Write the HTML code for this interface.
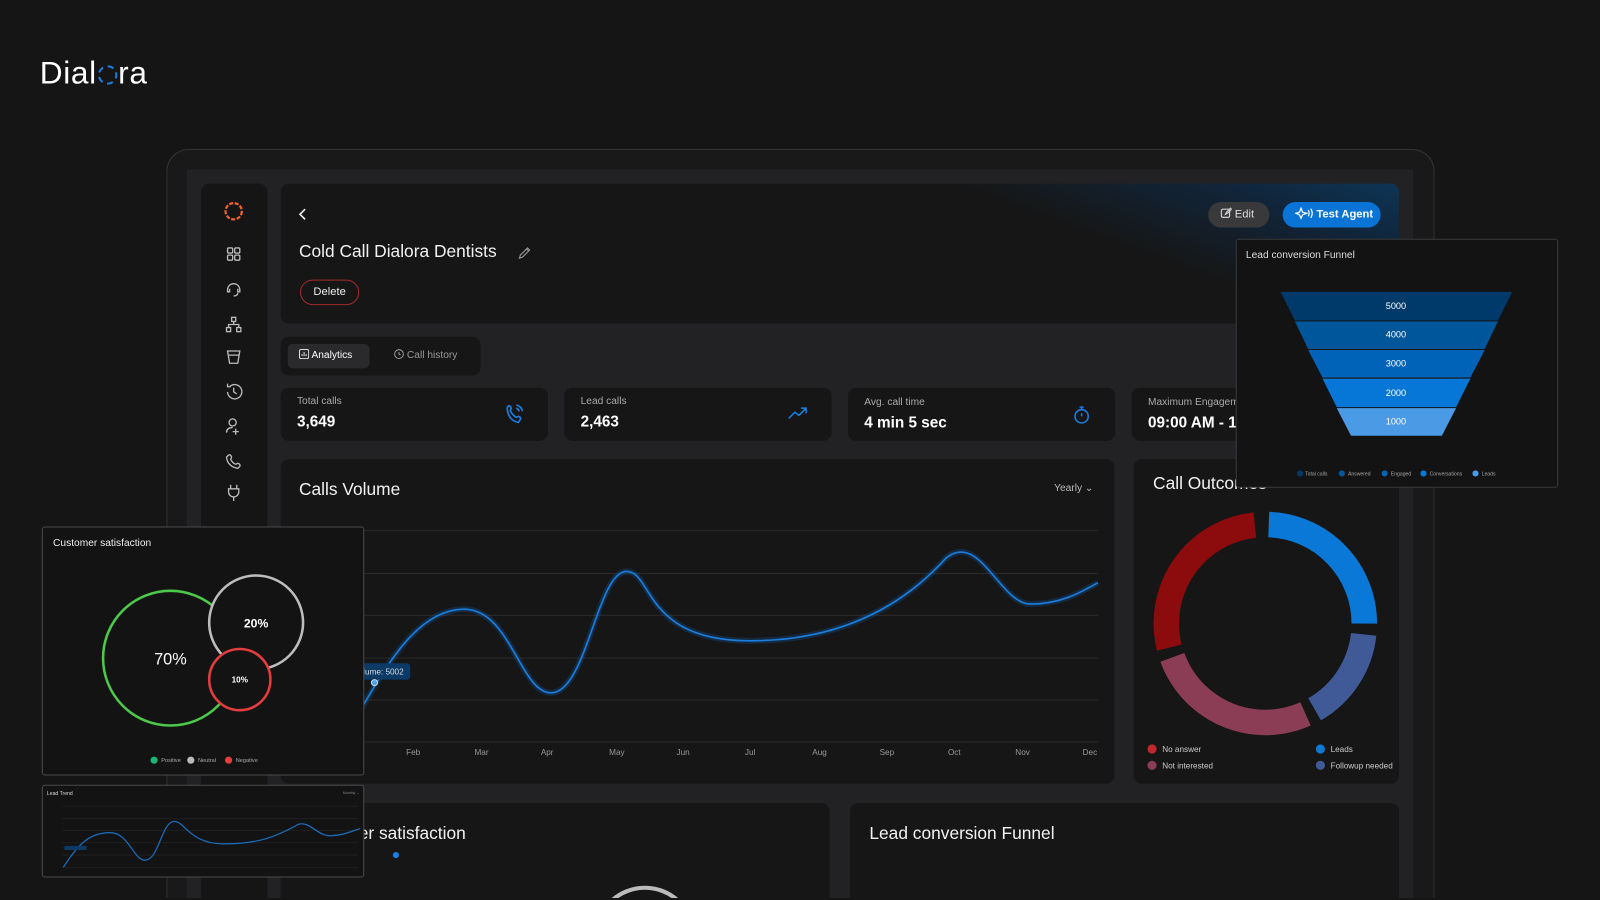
<!DOCTYPE html>
<html><head><meta charset="utf-8">
<style>
*{margin:0;padding:0;box-sizing:border-box}
html,body{width:1600px;height:900px;overflow:hidden;background:#151515;font-family:"Liberation Sans",sans-serif;color:#eee}
#w{position:absolute;left:0;top:0;width:1568px;height:880px;overflow:hidden;transform:scale(1.020408);transform-origin:0 0}
.a{position:absolute}
.card{position:absolute;background:#161616;border-radius:8px}
.lbl{font-size:10px;color:#aaa}
.val{font-size:15px;font-weight:bold;color:#fff}
.mo{position:absolute;top:733px;font-size:8px;color:#999}
</style></head><body><div id="w">

<div class="a" style="left:39px;top:54px;font-size:31px;color:#fff;letter-spacing:0.6px">Dial<span style="display:inline-block;width:19px;height:19px;border:2.5px dashed #1a7ee0;border-radius:50%;margin:0 1px;vertical-align:-1px"></span>ra</div>

<div class="a" style="left:163px;top:146px;width:1243px;height:736px;border:1.5px solid #343436;border-bottom:none;border-radius:22px 22px 0 0;background:#191919"></div>
<div class="a" style="left:183px;top:166px;width:1202px;height:716px;background:#222224"></div>

<div class="card" style="left:197px;top:180px;width:65px;height:702px;background:#151515;border-radius:8px 8px 0 0"></div>
<svg class="a" style="left:197px;top:180px" width="65" height="360" fill="none" stroke="#bbb" stroke-width="1.3">
<circle cx="32" cy="27" r="8" stroke="#f0632b" stroke-width="2.2" stroke-dasharray="4 1.5"/>
<rect x="26" y="63" width="5" height="5" rx="1"/><rect x="33" y="63" width="5" height="5" rx="1"/><rect x="26" y="70" width="5" height="5" rx="1"/><rect x="33" y="70" width="5" height="5" rx="1"/>
<path d="M26 104a6 6 0 0 1 12 0M26 104v2h2v-3M38 104v2h-2v-3M36 107q0 3-4 3"/>
<rect x="30" y="131" width="4" height="4"/><rect x="25" y="141" width="4" height="4"/><rect x="35" y="141" width="4" height="4"/><path d="M32 135v3M27 141v-3h10v3"/>
<path d="M26 164h12l-2 12h-8zM27 168h10"/>
<path d="M26 204a7 7 0 1 0 2-5M26 196v3h3M32 200v4l3 2"/>
<circle cx="31" cy="234" r="3.5"/><path d="M25 244q0-5 6-5M34 240v6M31 243h6"/>
<path d="M27 266q2-1 3 2l-1 2q2 4 5 5l2-1q3 1 2 3l-2 2q-10-2-11-11z"/>
<path d="M29 299v-4M35 299v-4M27 299h10v3a5 5 0 0 1-10 0zM32 307v4"/>
</svg>

<div class="card" style="left:275px;top:180px;width:1096px;height:137px;background:linear-gradient(200deg,#0d3556 0%,#11253a 12%,#161616 30%)"></div>
<svg class="a" style="left:290px;top:203px" width="14" height="14" fill="none" stroke="#eee" stroke-width="1.6"><path d="M9 2L4 7l5 5"/></svg>
<div class="a" style="left:293px;top:237px;font-size:17px;color:#f2f2f2">Cold Call Dialora Dentists</div>
<svg class="a" style="left:507px;top:241px" width="14" height="14" fill="none" stroke="#999" stroke-width="1.1"><path d="M2 12l1-3 7-7 2 2-7 7zM9 3l2 2"/></svg>
<div class="a" style="left:294px;top:274px;width:58px;height:25px;border:1.3px solid #a42a2a;border-radius:13px;font-size:11px;text-align:center;line-height:22px;color:#eee">Delete</div>
<div class="a" style="left:1184px;top:198px;width:60px;height:25px;background:#39393b;border-radius:13px;font-size:11px;line-height:25px;color:#ddd;padding-left:12px">
<svg width="11" height="11" style="vertical-align:-1px" fill="none" stroke="#ccc" stroke-width="1.2"><rect x="1" y="2" width="8" height="8" rx="1.5"/><path d="M5 7l1-2 4-4 1 1-4 4z"/></svg> Edit</div>
<div class="a" style="left:1257px;top:198px;width:96px;height:25px;background:#0a74d6;border-radius:13px;font-size:11px;line-height:25px;color:#fff;padding-left:12px;font-weight:bold">
<svg width="18" height="12" style="vertical-align:-2px" fill="none" stroke="#fff" stroke-width="1.2"><path d="M6 1l1.5 4 4 1-4 1.5L6 11 4.5 7.5 1 6l3.5-1zM13 3q2 3 0 6M15.5 1.5q3 4.5 0 9"/></svg> Test Agent</div>

<div class="card" style="left:275px;top:330px;width:196px;height:38px"></div>
<div class="a" style="left:282px;top:337px;width:80px;height:24px;background:#2a2a2c;border-radius:5px;font-size:10px;line-height:24px;padding-left:11px;color:#fff">
<svg width="10" height="10" style="vertical-align:-1px" fill="none" stroke="#ddd" stroke-width="1"><rect x="0.5" y="0.5" width="9" height="9" rx="1.5"/><path d="M3 7V5M5 7V3M7 7V5"/></svg> Analytics</div>
<div class="a" style="left:386px;top:337px;font-size:10px;line-height:24px;color:#999">
<svg width="10" height="10" style="vertical-align:-1px" fill="none" stroke="#999" stroke-width="1"><circle cx="5" cy="5" r="4.3"/><path d="M5 3v2l1.5 1"/></svg> Call history</div>

<div class="card" style="left:275px;top:380px;width:262px;height:52px"></div>
<div class="a lbl" style="left:291px;top:388px">Total calls</div><div class="a val" style="left:291px;top:405px">3,649</div>
<svg class="a" style="left:494px;top:395px" width="22" height="22" fill="none" stroke="#1a7fe0" stroke-width="1.6"><path d="M4 3q2-1 3 2l-1 2q2 5 6 7l2-1q3 1 2 3l-2 3Q4 17 3 5zM12 2q5 1 6 6M12 5q2 1 3 3"/></svg>
<div class="card" style="left:553px;top:380px;width:262px;height:52px"></div>
<div class="a lbl" style="left:569px;top:388px">Lead calls</div><div class="a val" style="left:569px;top:405px">2,463</div>
<svg class="a" style="left:772px;top:398px" width="20" height="14" fill="none" stroke="#1a7fe0" stroke-width="1.5"><path d="M1 12l6-6 4 3 7-7M13 2h5v5"/></svg>
<div class="card" style="left:831px;top:380px;width:262px;height:52px"></div>
<div class="a lbl" style="left:847px;top:389px">Avg. call time</div><div class="a val" style="left:847px;top:406px">4 min 5 sec</div>
<svg class="a" style="left:1050px;top:396px" width="20" height="22" fill="none" stroke="#1a7fe0" stroke-width="1.5"><circle cx="10" cy="12" r="6.5"/><path d="M10 12V9M8 3h4M10 3v2"/></svg>
<div class="card" style="left:1109px;top:380px;width:262px;height:52px"></div>
<div class="a lbl" style="left:1125px;top:389px">Maximum Engagement</div><div class="a val" style="left:1125px;top:406px">09:00 AM - 1</div>

<div class="card" style="left:275px;top:450px;width:817px;height:318px"></div>
<div class="a" style="left:293px;top:470px;font-size:17px;color:#f2f2f2">Calls Volume</div>
<div class="a" style="left:1033px;top:473px;font-size:10px;color:#bbb">Yearly &#8964;</div>
<svg class="a" style="left:275px;top:450px" width="817" height="318">
<g stroke="#2a2a2a" stroke-width="1"><path d="M15 70H801M15 112H801M15 153H801M15 195H801M15 236H801M15 277H801"/></g>
<g transform="translate(-275,-450)" fill="none">
<path d="M352,698 C380,650 410,597 455,597 C500,597 510,679 540,679 C575,679 585,560 614,560 C640,560 630,628 735,628 C800,628 870,610 927,547 C960,520 980,592 1010,592 C1040,592 1060,580 1076,571" stroke="#0a66c0" stroke-width="6" opacity="0.25"/>
<path d="M352,698 C380,650 410,597 455,597 C500,597 510,679 540,679 C575,679 585,560 614,560 C640,560 630,628 735,628 C800,628 870,610 927,547 C960,520 980,592 1010,592 C1040,592 1060,580 1076,571" stroke="#1a7fe0" stroke-width="1.6"/>
<rect x="340" y="650" width="62" height="16" rx="3" fill="#0b3a66"/>
<text x="356" y="661" font-size="8" fill="#ddd" font-family="Liberation Sans">lume: 5002</text>
<circle cx="367" cy="669" r="3" fill="#4aa0f0" stroke="#cde" stroke-width="1"/>
</g></svg>
<div class="mo" style="left:398px">Feb</div><div class="mo" style="left:465px">Mar</div><div class="mo" style="left:530px">Apr</div><div class="mo" style="left:597px">May</div><div class="mo" style="left:663px">Jun</div><div class="mo" style="left:730px">Jul</div><div class="mo" style="left:796px">Aug</div><div class="mo" style="left:862px">Sep</div><div class="mo" style="left:929px">Oct</div><div class="mo" style="left:995px">Nov</div><div class="mo" style="left:1061px">Dec</div>

<div class="card" style="left:1111px;top:450px;width:260px;height:318px"></div>
<div class="a" style="left:1130px;top:464px;font-size:17px;color:#f2f2f2">Call Outcomes</div>
<svg class="a" style="left:1111px;top:450px" width="260" height="318" fill="none">
<g transform="translate(129,161) rotate(-90)" stroke-width="25">
<circle r="97" stroke="#0a78d6" stroke-dasharray="149 700" stroke-dashoffset="-3.4"/>
<circle r="97" stroke="#405a98" stroke-dasharray="91 700" stroke-dashoffset="-163"/>
<circle r="97" stroke="#8a3d55" stroke-dasharray="159 700" stroke-dashoffset="-264"/>
<circle r="97" stroke="#8c0b0c" stroke-dasharray="166 700" stroke-dashoffset="-433"/>
</g>
<circle cx="18" cy="284" r="4.5" fill="#c0282b"/><circle cx="18" cy="300" r="4.5" fill="#8a3d55"/>
<circle cx="183" cy="284" r="4.5" fill="#0a78d6"/><circle cx="183" cy="300" r="4.5" fill="#405a98"/>
<g font-size="8" fill="#ccc" font-family="Liberation Sans"><text x="28" y="287">No answer</text><text x="28" y="303">Not interested</text><text x="193" y="287">Leads</text><text x="193" y="303">Followup needed</text></g>
</svg>

<div class="card" style="left:275px;top:787px;width:538px;height:95px;border-radius:8px 8px 0 0"></div>
<div class="a" style="left:293px;top:807px;font-size:17px;color:#f2f2f2">Customer satisfaction</div>
<div class="a" style="left:385px;top:835px;width:6px;height:6px;border-radius:50%;background:#1a7fe0"></div>
<svg class="a" style="left:580px;top:866px" width="104" height="14" fill="none"><circle cx="52" cy="52" r="48" stroke="#bbb" stroke-width="4"/></svg>
<div class="card" style="left:833px;top:787px;width:538px;height:95px;border-radius:8px 8px 0 0"></div>
<div class="a" style="left:852px;top:807px;font-size:17px;color:#f2f2f2">Lead conversion Funnel</div>

<div class="a" style="left:1211px;top:234px;width:316px;height:244px;background:#131313;border:1px solid #3a3a3a;border-radius:3px"></div>
<div class="a" style="left:1221px;top:245px;font-size:10px;color:#ddd">Lead conversion Funnel</div>
<svg class="a" style="left:1211px;top:234px" width="316" height="244">
<polygon points="44,52 271,52 257,80 58,80" fill="#003a6b"/>
<polygon points="58,81 257,81 244,108 71,108" fill="#00569a"/>
<polygon points="71,109 244,109 230,136 85,136" fill="#0063b8"/>
<polygon points="85,137 230,137 216,165 99,165" fill="#0677d6"/>
<polygon points="99,166 216,166 202,193 113,193" fill="#4a9ae6"/>
<g font-size="9" fill="#fff" text-anchor="middle" font-family="Liberation Sans"><text x="157" y="69">5000</text><text x="157" y="97">4000</text><text x="157" y="125">3000</text><text x="157" y="154">2000</text><text x="157" y="182">1000</text></g>
<g font-size="5" fill="#aaa" font-family="Liberation Sans">
<circle cx="63" cy="230" r="3" fill="#003a6b"/><text x="68" y="232">Total calls</text>
<circle cx="104" cy="230" r="3" fill="#00569a"/><text x="110" y="232">Answered</text>
<circle cx="146" cy="230" r="3" fill="#0063b8"/><text x="152" y="232">Engaged</text>
<circle cx="184" cy="230" r="3" fill="#0677d6"/><text x="190" y="232">Conversations</text>
<circle cx="235" cy="230" r="3" fill="#4a9ae6"/><text x="241" y="232">Leads</text></g>
</svg>

<div class="a" style="left:41px;top:516px;width:316px;height:244px;background:#131313;border:1px solid #4a4a4a;border-radius:3px"></div>
<div class="a" style="left:52px;top:527px;font-size:10px;color:#eee">Customer satisfaction</div>
<svg class="a" style="left:41px;top:516px" width="316" height="244" fill="none" font-family="Liberation Sans">
<circle cx="126" cy="129" r="66" stroke="#4cc84a" stroke-width="2.5"/>
<circle cx="210" cy="94" r="46" stroke="#bdbdbd" stroke-width="2.5" fill="#131313"/>
<circle cx="194" cy="150" r="30" stroke="#e33d3d" stroke-width="2.5" fill="#131313"/>
<text x="126" y="135" font-size="16" fill="#fff" text-anchor="middle">70%</text>
<text x="210" y="99" font-size="12" fill="#fff" text-anchor="middle" font-weight="bold">20%</text>
<text x="194" y="153" font-size="8" fill="#fff" text-anchor="middle" font-weight="bold">10%</text>
<circle cx="110" cy="229" r="3.5" fill="#1db577"/><text x="117" y="231" font-size="5.5" fill="#aaa">Positive</text>
<circle cx="146" cy="229" r="3.5" fill="#bbb"/><text x="153" y="231" font-size="5.5" fill="#aaa">Neutral</text>
<circle cx="183" cy="229" r="3.5" fill="#e33d3d"/><text x="190" y="231" font-size="5.5" fill="#aaa">Negative</text>
</svg>

<div class="a" style="left:41px;top:769px;width:316px;height:91px;background:#131313;border:1px solid #4a4a4a;border-radius:3px"></div>
<svg class="a" style="left:41px;top:769px" width="316" height="91" fill="none" font-family="Liberation Sans">
<text x="5" y="10" font-size="5" fill="#ddd">Lead Trend</text>
<text x="295" y="9" font-size="3.5" fill="#888">Monthly ⌄</text>
<g stroke="#262626" stroke-width="0.6"><path d="M20 21H310M20 33H310M20 45H310M20 57H310M20 69H310M20 81H310"/></g>
<path d="M21 81 C35 60 45 47 67 47 C85 47 90 74 101 74 C115 74 117 36 130 36 C140 36 145 58 178 58 C210 58 228 52 251 39 C262 35 270 50 282 50 C295 50 302 46 312 43" stroke="#1a6fc0" stroke-width="1.2"/>
<rect x="22" y="60" width="22" height="4" rx="1" fill="#0b3a66"/>
</svg>

</div></body></html>
